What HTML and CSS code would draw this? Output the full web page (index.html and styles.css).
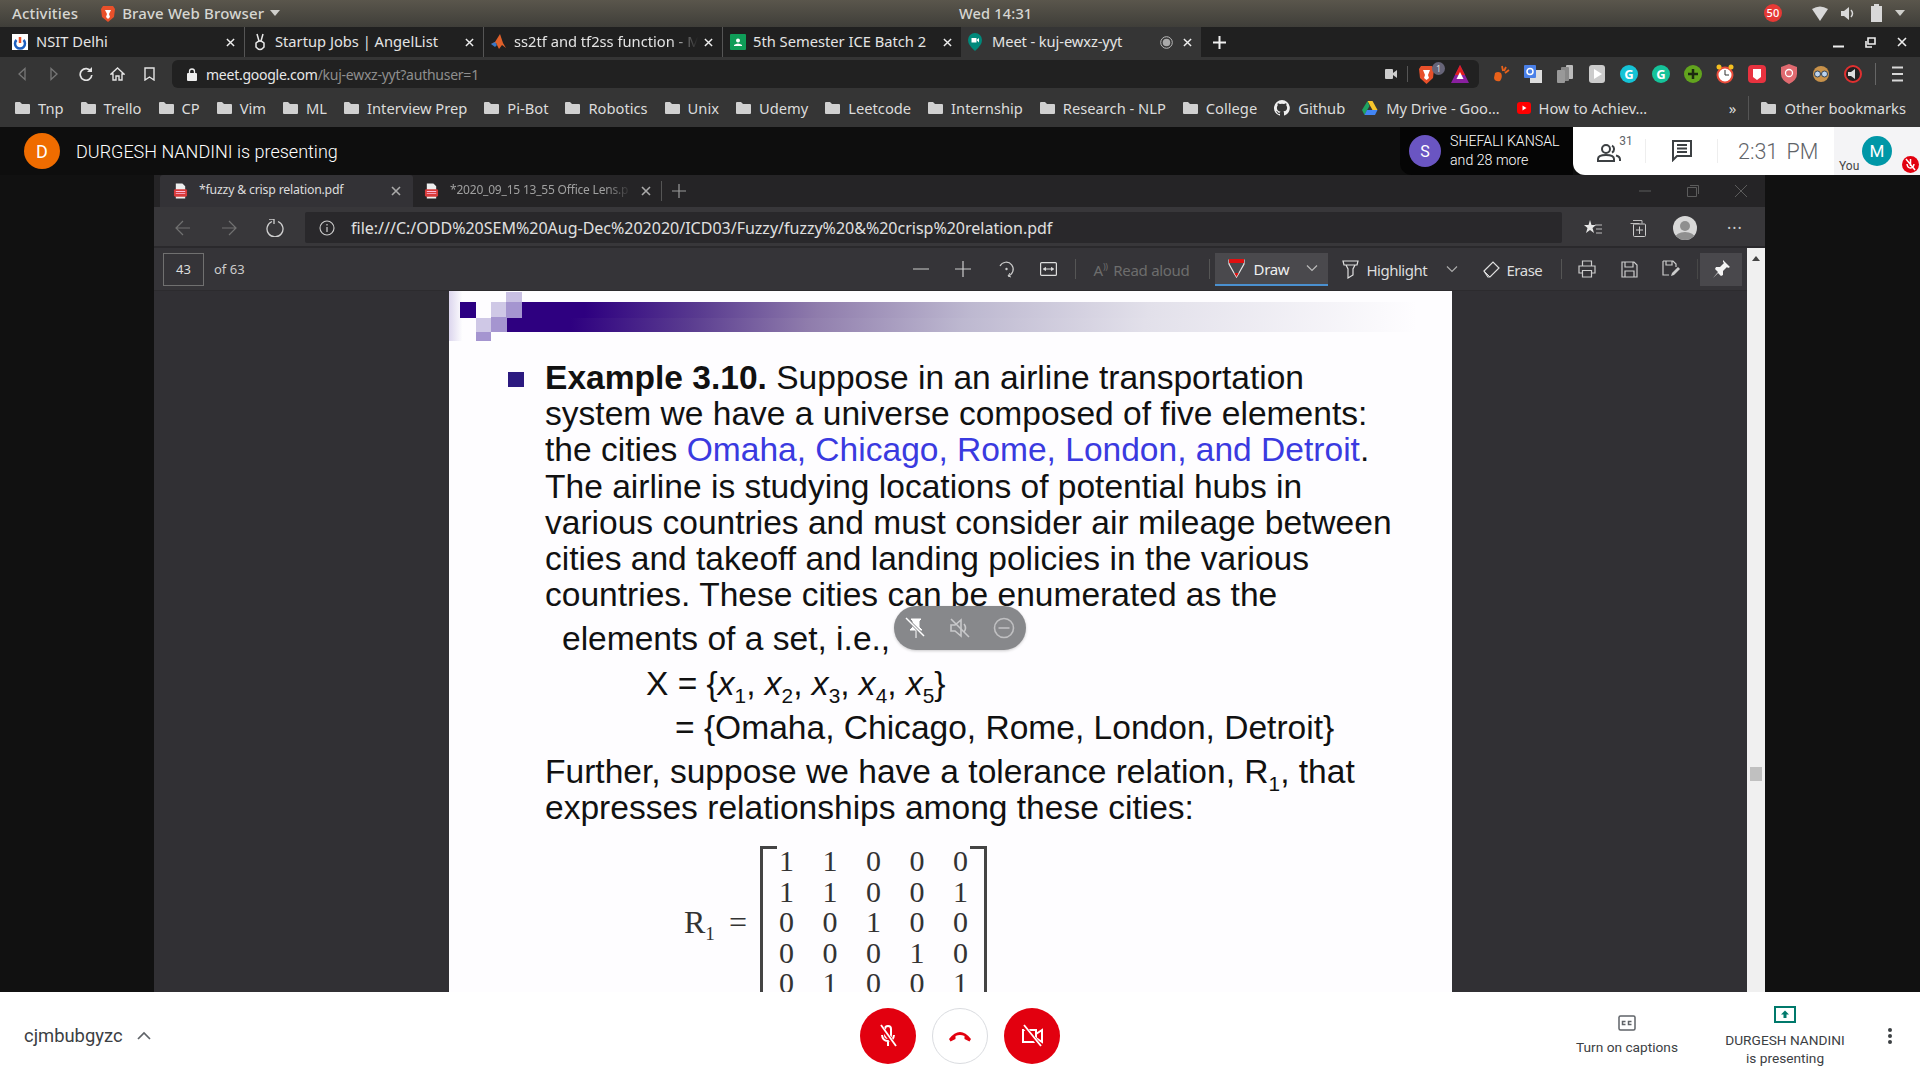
FILE: index.html
```html
<!DOCTYPE html>
<html lang="en">
<head>
<meta charset="utf-8">
<title>Meet - kuj-ewxz-yyt</title>
<link rel="stylesheet" href="styles.css">
</head>
<body>
<svg class="defs" width="0" height="0">
  <symbol id="folder" viewBox="0 0 15 14"><path d="M0 2a1 1 0 0 1 1-1h4l2 2h7a1 1 0 0 1 1 1v8a1 1 0 0 1-1 1H1a1 1 0 0 1-1-1z" fill="#d0d0d0"/></symbol>
  <symbol id="pdf" viewBox="0 0 16 16"><path d="M3 0h7l3 3v13H3z" fill="#eee"/><rect x="1" y="6" width="14" height="8" rx="1.5" fill="#d83b3b"/><path d="M3 8h10v1H3zm0 2h10v1H3z" fill="#fbd"/></symbol>
  <symbol id="close" viewBox="0 0 10 10"><path d="M1 1l8 8M9 1l-8 8" stroke="currentColor" stroke-width="1.6" fill="none"/></symbol>
  <symbol id="chev" viewBox="0 0 12 8"><path d="M1 1.5l5 5 5-5" stroke="currentColor" stroke-width="1.2" fill="none"/></symbol>
</svg>

<header class="sys">
  <div class="sys-left">
    <span>Activities</span>
    <svg class="sys-brave" width="14" height="17" viewBox="0 0 14 17"><path d="M2 1h10l2 3-1 8-6 5-6-5L0 4z" fill="#e8502a"/><path d="M4 5h6L8 9l1 3-2 2-2-2 1-3z" fill="#fff"/></svg>
    <span>Brave Web Browser</span>
    <i class="caret"></i>
  </div>
  <div class="sys-clock">Wed 14:31</div>
  <div class="sys-right">
    <span class="sys-badge">50</span>
    <svg width="16" height="15" viewBox="0 0 16 15"><path d="M0 3Q8-2 16 3L8 15z" fill="#d8d8d8"/></svg>
    <svg width="14" height="15" viewBox="0 0 14 15"><path d="M0 5h3l5-4v13l-5-4H0z" fill="#d8d8d8"/><path d="M10 4q3 3.500 0 7" stroke="#d8d8d8" stroke-width="1.500" fill="none"/></svg>
    <svg width="11" height="18" viewBox="0 0 11 18"><path d="M3 0h5v2h3v16H0V2h3z" fill="#d8d8d8"/></svg>
    <i class="caret"></i>
  </div>
</header>

<nav class="tabs">
  <div class="tab first">
    <svg class="fav" width="16" height="16" viewBox="0 0 16 16"><rect width="16" height="16" fill="#fff"/><path d="M8 3v6" stroke="#e8502a" stroke-width="2.500"/><path d="M4.500 6a5 5 0 1 0 7 0" stroke="#1d5fc0" stroke-width="2.500" fill="none"/></svg>
    <span class="tab-title">NSIT Delhi</span>
    <svg class="tab-x" width="9" height="9"><use href="#close"/></svg>
  </div>
  <div class="tab sep">
    <svg class="fav" width="16" height="18" viewBox="0 0 16 18"><path d="M5 1l2 7M11 1L9 8M4 10q4-4 8 0v4q-4 5-8 0z" stroke="#e8e8e8" stroke-width="1.500" fill="none"/></svg>
    <span class="tab-title">Startup Jobs | AngelList</span>
    <svg class="tab-x" width="9" height="9"><use href="#close"/></svg>
  </div>
  <div class="tab sep">
    <svg class="fav" width="16" height="16" viewBox="0 0 16 16"><path d="M0 10l4-2 5-8 3 9 3 5-4-3-3 4-3-6z" fill="#e0602a"/><path d="M0 10l4-2 2 3-2 2z" fill="#3878c8"/></svg>
    <span class="tab-title fade">ss2tf and tf2ss function - M</span>
    <svg class="tab-x" width="9" height="9"><use href="#close"/></svg>
  </div>
  <div class="tab sep">
    <svg class="fav" width="16" height="16" viewBox="0 0 16 16"><rect width="16" height="16" rx="1" fill="#0f9d58"/><circle cx="8" cy="6.500" r="2" fill="#fff"/><path d="M4 12h8v-1q-4-3-8 0z" fill="#fff"/></svg>
    <span class="tab-title">5th Semester ICE Batch 2</span>
    <svg class="tab-x" width="9" height="9"><use href="#close"/></svg>
  </div>
  <div class="tab active">
    <svg class="fav" width="14" height="18" viewBox="0 0 14 18"><path d="M7 0a7 7 0 0 1 7 7q0 5-7 11Q0 12 0 7a7 7 0 0 1 7-7z" fill="#00897b"/><rect x="3.500" y="5" width="5" height="4.500" fill="#fff"/><path d="M8.500 7l2.500-2v4.500z" fill="#fff"/></svg>
    <span class="tab-title">Meet - kuj-ewxz-yyt</span>
    <svg class="rec" width="13" height="13" viewBox="0 0 13 13"><circle cx="6.500" cy="6.500" r="5.800" fill="none" stroke="#bbb"/><circle cx="6.500" cy="6.500" r="3.800" fill="#aaa"/></svg>
    <svg class="tab-x" width="9" height="9"><use href="#close"/></svg>
  </div>
  <svg class="tab-new" width="13" height="13" viewBox="0 0 13 13"><path d="M6.500 0v13M0 6.500h13" stroke="#f0f0f0" stroke-width="2"/></svg>
  <div class="win">
    <svg width="11" height="11" viewBox="0 0 11 11"><path d="M0 9.500h11" stroke="#eee" stroke-width="2"/></svg>
    <svg width="11" height="11" viewBox="0 0 11 11"><path d="M3 1h7v6H3zM1 4v6h6" stroke="#eee" stroke-width="1.600" fill="none"/></svg>
    <svg width="10" height="10"><use href="#close"/></svg>
  </div>
</nav>

<section class="omni">
  <div class="omni-nav">
    <svg width="10" height="14" viewBox="0 0 10 14"><path d="M8 1.500L2 7l6 5.500z" fill="none" stroke="#777" stroke-width="1.300"/></svg>
    <svg width="10" height="14" viewBox="0 0 10 14"><path d="M2 1.500L8 7l-6 5.500z" fill="none" stroke="#777" stroke-width="1.300"/></svg>
    <svg width="14" height="14" viewBox="0 0 14 14"><path d="M12 4.500A5.800 5.800 0 1 0 12.800 8" fill="none" stroke="#e4e4e4" stroke-width="1.700"/><path d="M13 0v5H8z" fill="#e4e4e4"/></svg>
    <svg width="15" height="14" viewBox="0 0 15 14"><path d="M7.500 1L1 7h2v6h3V9h3v4h3V7h2z" fill="none" stroke="#e4e4e4" stroke-width="1.400"/></svg>
    <svg width="11" height="14" viewBox="0 0 11 14"><path d="M1 1h9v12L5.500 10 1 13z" fill="none" stroke="#e4e4e4" stroke-width="1.400"/></svg>
  </div>
  <div class="url">
    <svg class="lock" width="10" height="13" viewBox="0 0 10 13"><path d="M2.500 6V3.500a2.500 2.500 0 0 1 5 0V6" fill="none" stroke="#eee" stroke-width="1.300"/><rect y="5" width="10" height="8" rx="1" fill="#eee"/></svg>
    <span class="url-host">meet.google.com</span><span class="url-path">/kuj-ewxz-yyt?authuser=1</span>
    <div class="url-end">
      <svg width="12" height="10" viewBox="0 0 12 10"><rect width="8" height="10" rx="1" fill="#ccc"/><path d="M8 4l4-3v8L8 6z" fill="#ccc"/></svg>
      <i class="vsep"></i>
      <svg class="u-brave" width="15" height="19" viewBox="0 0 15 19"><path d="M2 1h11l2 3-1 9-6.500 6L1 13 0 4z" fill="#e8502a"/><path d="M4 5h7L9 10l1 3-2.500 2L5 13l1-3z" fill="#fff"/></svg>
      <span class="u-badge">1</span>
      <svg class="u-tri" width="18" height="18" viewBox="0 0 18 18"><path d="M9 0l9 18H0z" fill="#8a1fa0"/><path d="M9 0l5 10H4z" fill="#e02020"/><path d="M9 7l3.500 7h-7z" fill="#fff"/></svg>
    </div>
  </div>
  <div class="exts">
    <svg width="18" height="18" viewBox="0 0 18 18"><path d="M3 8q3-2 6 0 2 4-1 8-5 1-6-3z" fill="#e8611a"/><path d="M10 1l1 5M14 2l-2 4M17 5l-4 3" stroke="#e8611a" stroke-width="1.800"/></svg>
    <svg width="18" height="18" viewBox="0 0 18 18"><rect x="6" y="5" width="12" height="13" fill="#ddd"/><rect width="12" height="13" rx="1" fill="#4a80e8"/><circle cx="6" cy="6.500" r="3" fill="none" stroke="#fff" stroke-width="1.500"/></svg>
    <svg width="18" height="18" viewBox="0 0 18 18"><rect x="10" y="0" width="7" height="14" rx="1" fill="#bbb"/><rect x="5" y="2" width="8" height="14" rx="1" fill="#888"/><rect x="1" y="5" width="8" height="13" rx="1" fill="#999"/></svg>
    <svg width="18" height="18" viewBox="0 0 18 18"><rect x="1" width="16" height="18" rx="3" fill="#ccc"/><path d="M6 4l8 5-8 5z" fill="#fff"/></svg>
    <svg width="18" height="18" viewBox="0 0 18 18"><circle cx="9" cy="9" r="9" fill="#15c3d6"/><text x="9" y="13.500" class="ext-g">G</text></svg>
    <svg width="18" height="18" viewBox="0 0 18 18"><circle cx="9" cy="9" r="9" fill="#15c39a"/><text x="9" y="13.500" class="ext-g">G</text></svg>
    <svg width="18" height="18" viewBox="0 0 18 18"><circle cx="9" cy="9" r="9" fill="#62a41e"/><path d="M9 4v10M4 9h10" stroke="#1c2a10" stroke-width="2.500"/></svg>
    <svg width="18" height="20" viewBox="0 0 18 20"><circle cx="9" cy="11" r="7.500" fill="#fff" stroke="#e84b3a" stroke-width="2"/><circle cx="3" cy="3" r="2.500" fill="#f4c020"/><circle cx="15" cy="3" r="2.500" fill="#f4c020"/><path d="M9 6v5h4" stroke="#333" fill="none"/></svg>
    <svg width="18" height="18" viewBox="0 0 18 18"><rect width="18" height="18" rx="4" fill="#e8323f"/><path d="M5 4h8v8l-4 3-4-3z" fill="#fff"/></svg>
    <svg width="18" height="20" viewBox="0 0 18 20"><path d="M9 0l8 3v7q0 6-8 10-8-4-8-10V3z" fill="#e06a70"/><circle cx="9" cy="9" r="3.500" fill="none" stroke="#fff" stroke-width="1.300"/></svg>
    <svg width="18" height="20" viewBox="0 0 18 20"><circle cx="9" cy="10" r="8" fill="#c8924a"/><circle cx="5.500" cy="10" r="3" fill="#bcd4f0" stroke="#345" stroke-width="1"/><circle cx="12.500" cy="10" r="3" fill="#bcd4f0" stroke="#345" stroke-width="1"/></svg>
    <svg width="18" height="18" viewBox="0 0 18 18"><circle cx="9" cy="9" r="8" fill="#222" stroke="#e03030" stroke-width="2"/><path d="M4 7h3l4-3v10l-4-3H4z" fill="#ddd"/></svg>
    <i class="vsep ext-sep"></i>
    <svg class="menu" width="11" height="16" viewBox="0 0 11 16"><path d="M0 1.500h11M0 8h11M0 14.500h11" stroke="#d8d8d8" stroke-width="2"/></svg>
  </div>
</section>

<section class="bookmarks">
  <a class="bm"><svg width="15" height="14"><use href="#folder"/></svg>Tnp</a>
  <a class="bm"><svg width="15" height="14"><use href="#folder"/></svg>Trello</a>
  <a class="bm"><svg width="15" height="14"><use href="#folder"/></svg>CP</a>
  <a class="bm"><svg width="15" height="14"><use href="#folder"/></svg>Vim</a>
  <a class="bm"><svg width="15" height="14"><use href="#folder"/></svg>ML</a>
  <a class="bm"><svg width="15" height="14"><use href="#folder"/></svg>Interview Prep</a>
  <a class="bm"><svg width="15" height="14"><use href="#folder"/></svg>Pi-Bot</a>
  <a class="bm"><svg width="15" height="14"><use href="#folder"/></svg>Robotics</a>
  <a class="bm"><svg width="15" height="14"><use href="#folder"/></svg>Unix</a>
  <a class="bm"><svg width="15" height="14"><use href="#folder"/></svg>Udemy</a>
  <a class="bm"><svg width="15" height="14"><use href="#folder"/></svg>Leetcode</a>
  <a class="bm"><svg width="15" height="14"><use href="#folder"/></svg>Internship</a>
  <a class="bm"><svg width="15" height="14"><use href="#folder"/></svg>Research - NLP</a>
  <a class="bm"><svg width="15" height="14"><use href="#folder"/></svg>College</a>
  <a class="bm"><svg width="16" height="16" viewBox="0 0 16 16"><path fill="#eee" d="M8 0a8 8 0 0 0-2.500 15.600c.4.100.5-.2.500-.4v-1.400c-2.200.5-2.700-1-2.700-1-.4-.9-.9-1.200-.9-1.200-.7-.5.100-.5.100-.5.800.100 1.200.8 1.200.8.700 1.200 1.900.9 2.300.7.100-.5.300-.9.500-1.100-1.800-.2-3.600-.9-3.600-4 0-.9.300-1.600.8-2.100-.1-.2-.4-1 .1-2.100 0 0 .7-.2 2.200.8a7.600 7.600 0 0 1 4 0c1.500-1 2.200-.8 2.200-.8.400 1.100.200 1.900.100 2.100.5.600.8 1.300.8 2.100 0 3.100-1.900 3.700-3.700 3.900.3.300.6.800.6 1.500v2.200c0 .2.100.5.600.4A8 8 0 0 0 8 0z"/></svg>Github</a>
  <a class="bm"><svg width="16" height="14" viewBox="0 0 16 14"><path d="M5.500 0h5l5 9h-5z" fill="#f7c52b"/><path d="M5.500 0L0 9l2.500 5 5-9z" fill="#1ea362"/><path d="M2.500 14h10.500l2.500-5H5z" fill="#4285f4"/></svg>My Drive - Goo…</a>
  <a class="bm"><svg width="14" height="12" viewBox="0 0 14 12"><rect width="14" height="12" rx="3" fill="#f00"/><path d="M5.500 3.500l4 2.500-4 2.500z" fill="#fff"/></svg>How to Achiev…</a>
  <div class="bm-end">
    <span class="bm-more">»</span>
    <i class="vsep"></i>
    <a class="bm"><svg width="15" height="14"><use href="#folder"/></svg>Other bookmarks</a>
  </div>
</section>

<section class="meet-head">
  <span class="avatar av-d">D</span>
  <span class="presenting">DURGESH NANDINI is presenting</span>
  <div class="speaker">
    <span class="avatar av-s">S</span>
    <div class="speaker-text"><div>SHEFALI KANSAL</div><div>and 28 more</div></div>
  </div>
  <div class="panel">
    <div class="panel-cell people">
      <svg width="24" height="20" viewBox="0 0 24 20"><circle cx="9" cy="6" r="4" fill="none" stroke="#3c4043" stroke-width="2"/><path d="M1 18v-2q0-4 8-4t8 4v2z" fill="none" stroke="#3c4043" stroke-width="2"/><path d="M15 2.500a4 4 0 0 1 0 7M19 12.500q4 1 4 4v1.500" fill="none" stroke="#3c4043" stroke-width="2"/></svg>
      <sup class="count">31</sup>
    </div>
    <div class="panel-cell chat">
      <svg width="20" height="22" viewBox="0 0 20 22"><path d="M1 1h18v15H5l-4 4z" fill="none" stroke="#3c4043" stroke-width="2"/><path d="M5 5h10M5 8.500h10M5 12h10" stroke="#3c4043" stroke-width="1.800"/></svg>
    </div>
    <div class="panel-time">2:31 PM</div>
    <div class="self">
      <span class="you">You</span>
      <span class="avatar av-m">M</span>
      <span class="self-mute"><svg width="11" height="13" viewBox="0 0 11 13"><path d="M5.500 1v7M2 6q.5 4 3.500 4T9 6M1 1l9 11" stroke="#fff" stroke-width="1.500" fill="none"/></svg></span>
    </div>
  </div>
</section>

<main class="stage">
  <div class="edge">
    <div class="edge-tabs">
      <div class="etab on">
        <svg width="15" height="16"><use href="#pdf"/></svg>
        <span class="etab-title">*fuzzy &amp; crisp relation.pdf</span>
        <svg class="etab-x" width="10" height="10"><use href="#close"/></svg>
      </div>
      <div class="etab off">
        <svg width="15" height="16"><use href="#pdf"/></svg>
        <span class="etab-title dim fade">*2020_09_15 13_55 Office Lens.p</span>
        <svg class="etab-x" width="10" height="10"><use href="#close"/></svg>
      </div>
      <i class="vsep etab-sep"></i>
      <svg class="etab-new" width="14" height="14" viewBox="0 0 14 14"><path d="M7 0v14M0 7h14" stroke="#9a9a9a" stroke-width="1.200"/></svg>
      <div class="edge-win">
        <svg width="12" height="12" viewBox="0 0 12 12"><path d="M0 6h12" stroke="#5c5c5c"/></svg>
        <svg width="12" height="12" viewBox="0 0 12 12"><path d="M.5 2.500h9v9h-9zM3 .500h8.500V9" stroke="#5c5c5c" fill="none"/></svg>
        <svg width="12" height="12" viewBox="0 0 12 12"><path d="M0 0l12 12M12 0L0 12" stroke="#5c5c5c"/></svg>
      </div>
    </div>
    <div class="edge-nav">
      <svg class="en-a" width="16" height="16" viewBox="0 0 16 16"><path d="M15 8H1M8 1L1 8l7 7" stroke="#717171" stroke-width="1.200" fill="none"/></svg>
      <svg class="en-b" width="16" height="16" viewBox="0 0 16 16"><path d="M1 8h14M8 1l7 7-7 7" stroke="#717171" stroke-width="1.200" fill="none"/></svg>
      <svg class="en-c" width="18" height="18" viewBox="0 0 18 18"><path d="M6 2.500A8 8 0 1 0 12 2.500" stroke="#d0d0d0" stroke-width="1.300" fill="none"/><path d="M3 0h5v5" stroke="#d0d0d0" stroke-width="1.300" fill="none"/></svg>
      <div class="edge-url">
        <svg width="16" height="16" viewBox="0 0 16 16"><circle cx="8" cy="8" r="7" fill="none" stroke="#ccc" stroke-width="1.100"/><path d="M8 7v5M8 4v1.500" stroke="#ccc" stroke-width="1.200"/></svg>
        <span>file:///C:/ODD%20SEM%20Aug-Dec%202020/ICD03/Fuzzy/fuzzy%20&amp;%20crisp%20relation.pdf</span>
      </div>
      <div class="edge-tools">
        <svg width="18" height="18" viewBox="0 0 18 18"><path d="M6 1l1.500 5H12L8.500 9l1.500 5L6 11l-4 3 1.500-5L0 6h4.500z" fill="#e6e6e6"/><path d="M11 6h7M12 10h6M12 14h6" stroke="#bbb" stroke-width="1.200"/></svg>
        <svg width="18" height="18" viewBox="0 0 18 18"><path d="M4 1.500h9v3M1.500 4.500h9" stroke="#bdbdbd" fill="none"/><rect x="4.500" y="5" width="12" height="12.500" rx="1" stroke="#ccc" fill="none"/><path d="M10.500 7.500v7.500M7 11h7" stroke="#ccc"/></svg>
        <svg class="et-av" width="24" height="24" viewBox="0 0 24 24"><defs><clipPath id="clip-av"><circle cx="12" cy="12" r="12"/></clipPath></defs><circle cx="12" cy="12" r="12" fill="#d8d8d8"/><g clip-path="url(#clip-av)"><circle cx="12" cy="10" r="5" fill="#8f8f8f"/><ellipse cx="12" cy="22" rx="10" ry="6" fill="#8f8f8f"/></g></svg>
        <span class="dots">···</span>
      </div>
    </div>
    <div class="pdf-wrap">
      <div class="pdf-col">
        <div class="pdf-bar">
          <span class="pg-box">43</span>
          <span class="pg-of">of 63</span>
          <div class="pdf-tools">
            <svg class="t-zoom-out" width="16" height="2" viewBox="0 0 16 2"><path d="M0 1h16" stroke="#aaa" stroke-width="1.300"/></svg>
            <svg class="t-zoom-in" width="16" height="16" viewBox="0 0 16 16"><path d="M8 0v16M0 8h16" stroke="#ccc" stroke-width="1.200"/></svg>
            <svg class="t-rot" width="18" height="18" viewBox="0 0 18 18"><path d="M3 6a7 7 0 1 1 8 10" stroke="#ccc" stroke-width="1.200" fill="none"/><path d="M11 16l2-3M11 16l3 1" stroke="#ccc"/><circle cx="9.500" cy="9" r="1.200" fill="#ccc"/></svg>
            <svg class="t-fit" width="17" height="14" viewBox="0 0 17 14"><rect x=".6" y=".6" width="15.800" height="12.800" rx="1" stroke="#ddd" stroke-width="1.200" fill="none"/><path d="M3.500 7h10M3.500 7l2-1.500v3zM13.500 7l-2-1.500v3z" stroke="#ddd" fill="#ddd"/></svg>
            <i class="vsep t-sep1"></i>
            <span class="read"><span class="read-a">A<sup>))</sup></span> Read aloud</span>
            <i class="vsep t-sep2"></i>
            <div class="draw">
              <svg width="17" height="19" viewBox="0 0 17 19"><path d="M1 1h15v4l-5 9-2.500 4L6 14 1 5z" fill="none" stroke="#e6e6e6" stroke-width="1.200"/><rect x="1" y="0" width="15" height="4" fill="#e01010"/><path d="M6.500 14h4L8.500 18z" fill="#e01010"/></svg>
              <span>Draw</span>
              <svg class="dchev" width="12" height="8"><use href="#chev"/></svg>
            </div>
            <div class="tool hl">
              <svg width="17" height="19" viewBox="0 0 17 19"><path d="M1 1h15L15 5h-2l-2 4v6l-5 3V9L4 5H2zM2 5h13" fill="none" stroke="#e0e0e0" stroke-width="1.200"/></svg>
              <span>Highlight</span>
              <svg class="hchev" width="12" height="8"><use href="#chev"/></svg>
            </div>
            <div class="tool erase">
              <svg width="17" height="17" viewBox="0 0 17 17"><path d="M1 10l9-9 6 6-9 9H5z" fill="none" stroke="#e0e0e0" stroke-width="1.200"/><path d="M1 10l6 6" stroke="#e0e0e0"/></svg>
              <span>Erase</span>
            </div>
            <i class="vsep t-sep3"></i>
            <svg class="t-print" width="18" height="18" viewBox="0 0 18 18"><path d="M4.500 6V1h9v5M4.500 13H1V6h16v7h-3.500M4.500 10.500h9V17h-9z" fill="none" stroke="#ccc" stroke-width="1.200"/></svg>
            <svg class="t-save" width="17" height="17" viewBox="0 0 17 17"><path d="M1 1h12l3 3v12H1zM4 1v5h8V1M4 16v-6h9v6" fill="none" stroke="#ccc" stroke-width="1.200"/></svg>
            <svg class="t-saveas" width="18" height="18" viewBox="0 0 18 18"><path d="M1 1h10l3 3v3M1 1v14h6M4 1v4h6V1" fill="none" stroke="#ccc" stroke-width="1.200"/><path d="M9 16l1-3 6-6 2 2-6 6z" fill="#ccc"/></svg>
            <i class="vsep t-sep4"></i>
            <div class="pin">
              <svg width="18" height="18" viewBox="0 0 18 18"><path d="M11 0l7 7-2 1-1-1-4 4v4l-2 1-3-3-5 5 5-6-3-3 1-2h4l4-4-1-1z" fill="#f4f4f4"/></svg>
            </div>
          </div>
        </div>
        <div class="pdf-body">
          <article class="page">
            <svg class="banner" width="1003" height="50" viewBox="0 0 1003 50">
              <defs>
                <linearGradient id="bg" x1="0" x2="1">
                  <stop offset="0" stop-color="#2e0080"/>
                  <stop offset=".07" stop-color="#2e0080"/>
                  <stop offset=".2" stop-color="#5a3c90"/>
                  <stop offset=".33" stop-color="#8f7cac"/>
                  <stop offset=".5" stop-color="#bdb8d0"/>
                  <stop offset=".7" stop-color="#e2e0ea"/>
                  <stop offset="1" stop-color="#fefdff"/>
                </linearGradient>
                <linearGradient id="bl" x1="0" x2="1">
                  <stop offset="0" stop-color="#dcd6ee"/>
                  <stop offset="1" stop-color="#fff"/>
                </linearGradient>
              </defs>
              <rect width="14" height="50" fill="url(#bl)"/>
              <rect x="73" y="11" width="895" height="16" fill="url(#bg)"/>
              <rect x="58" y="27" width="910" height="14" fill="url(#bg)"/>
              <rect x="11" y="11" width="16" height="16" fill="#2c0082"/>
              <rect x="57" y="1" width="16" height="10" fill="#c9c0e3"/>
              <rect x="42" y="11" width="15" height="15" fill="#cfc8e6"/>
              <rect x="57" y="11" width="16" height="16" fill="#a595d0"/>
              <rect x="27" y="27" width="15" height="14" fill="#cfc8e6"/>
              <rect x="42" y="26" width="16" height="15" fill="#a595d0"/>
              <rect x="27" y="41" width="15" height="9" fill="#a595d0"/>
            </svg>
            <div class="copy">
              <div class="para lead-block">
                <i class="bullet"></i>
                <p><b>Example 3.10.</b> Suppose in an airline transportation</p>
                <p>system we have a universe composed of five elements:</p>
                <p>the cities <span class="blue">Omaha, Chicago, Rome, London, and Detroit</span>.</p>
                <p>The airline is studying locations of potential hubs in</p>
                <p>various countries and must consider air mileage between</p>
                <p>cities and takeoff and landing policies in the various</p>
                <p>countries. These cities can be enumerated as the</p>
              </div>
              <p class="gap l-set">elements of a set, i.e.,</p>
              <p class="gap l-x">X = {<em>x</em><sub>1</sub>, <em>x</em><sub>2</sub>, <em>x</em><sub>3</sub>, <em>x</em><sub>4</sub>, <em>x</em><sub>5</sub>}</p>
              <p class="gap l-eq">= {Omaha, Chicago, Rome, London, Detroit}</p>
              <p class="gap">Further, suppose we have a tolerance relation, R<sub>1</sub>, that</p>
              <p>expresses relationships among these cities:</p>
              <div class="matrix-row">
                <span class="mat-label">R<sub>1</sub> =</span>
                <div class="matrix">
                  <span>1</span><span>1</span><span>0</span><span>0</span><span>0</span>
                  <span>1</span><span>1</span><span>0</span><span>0</span><span>1</span>
                  <span>0</span><span>0</span><span>1</span><span>0</span><span>0</span>
                  <span>0</span><span>0</span><span>0</span><span>1</span><span>0</span>
                  <span>0</span><span>1</span><span>0</span><span>0</span><span>1</span>
                </div>
              </div>
            </div>
          </article>
          <div class="pill">
            <svg width="22" height="22" viewBox="0 0 22 22"><path d="M6 2h10l-2 2v6l3 3H5l3-3V4zM11 13v8" fill="#fff" stroke="#fff"/><path d="M2 2l18 18" stroke="#8a8b8e" stroke-width="3"/><path d="M1 1l18 18" stroke="#fff" stroke-width="1.500"/></svg>
            <svg width="22" height="22" viewBox="0 0 22 22"><path d="M2 8h4l6-5v16l-6-5H2z" fill="none" stroke="#c8c8ca" stroke-width="1.600"/><path d="M15 7q3 4 0 8M2 2l18 18" stroke="#c8c8ca" stroke-width="1.600" fill="none"/></svg>
            <svg width="22" height="22" viewBox="0 0 22 22"><circle cx="11" cy="11" r="9.500" fill="none" stroke="#c0c0c2" stroke-width="1.600"/><path d="M5.500 11h11" stroke="#c0c0c2" stroke-width="1.600"/></svg>
          </div>
        </div>
      </div>
      <div class="scroll">
        <i class="sc-up"></i>
        <i class="sc-thumb"></i>
      </div>
    </div>
  </div>
</main>

<footer class="bottom">
  <div class="meeting">
    <span>cjmbubgyzc</span>
    <svg width="14" height="9" viewBox="0 0 14 9"><path d="M1 8l6-6 6 6" fill="none" stroke="#5f6368" stroke-width="1.700"/></svg>
  </div>
  <div class="calls">
    <button class="round red"><svg width="22" height="24" viewBox="0 0 22 24"><path d="M11 2a3 3 0 0 1 3 3v6a3 3 0 0 1-6 0V5a3 3 0 0 1 3-3zM5 11q.5 6 6 6t6-6M11 17v5" fill="none" stroke="#fff" stroke-width="2"/><path d="M3 1l16 22" stroke="#e2000f" stroke-width="4"/><path d="M4 1l15 21" stroke="#fff" stroke-width="1.800"/></svg></button>
    <button class="round plain"><svg width="24" height="12" viewBox="0 0 24 12"><path d="M1 9Q12-5 23 9l-1.500 2.500-5-2.500V6q-4.500-2-9 0v3l-5 2.500z" fill="#e2000f"/></svg></button>
    <button class="round red"><svg width="24" height="24" viewBox="0 0 24 24"><path d="M3 6h13v12H3zM16 10l6-4v12l-6-4" fill="none" stroke="#fff" stroke-width="2"/><path d="M3 1l18 22" stroke="#e2000f" stroke-width="4"/><path d="M4 1l17 21" stroke="#fff" stroke-width="1.800"/></svg></button>
  </div>
  <div class="actions">
    <div class="act caps">
      <svg width="18" height="16" viewBox="0 0 18 16"><rect x="1" y="1" width="16" height="14" rx="1.500" fill="none" stroke="#5f6368" stroke-width="1.500"/><path d="M7.500 6.500h-3v3h3M13.500 6.500h-3v3h3" fill="none" stroke="#5f6368" stroke-width="1.500"/></svg>
      <span>Turn on captions</span>
    </div>
    <div class="act pres">
      <svg width="22" height="17" viewBox="0 0 22 17"><rect x="1" y="1" width="20" height="15" fill="none" stroke="#00796b" stroke-width="2"/><path d="M11 4.500l4 4h-2.500v3.500h-3V8.500H7z" fill="#00796b"/></svg>
      <span>DURGESH NANDINI</span>
      <span>is presenting</span>
    </div>
    <svg class="kebab" width="6" height="18" viewBox="0 0 6 18"><circle cx="3" cy="3" r="2" fill="#3c4043"/><circle cx="3" cy="9" r="2" fill="#3c4043"/><circle cx="3" cy="15" r="2" fill="#3c4043"/></svg>
  </div>
</footer>
</body>
</html>
```
FILE: styles.css
```css
* { box-sizing: border-box; }
html, body { margin: 0; height: 100%; }
body { width: 1920px; height: 1080px; overflow: hidden; display: flex; flex-direction: column; font-family: "Noto Sans", sans-serif; background: #111; }
.defs { position: absolute; }
i { display: block; font-style: normal; }
svg { display: block; flex: none; }
.vsep { width: 1px; height: 24px; background: #555; flex: none; }

/* ubuntu bar */
.sys { height: 27px; flex: none; display: flex; align-items: center; padding: 0 0 1px 12px; color: #d6d6d2; font-size: 15px; font-weight: 500; background: linear-gradient(#5a564c, #3f3e39); letter-spacing: .15px; }
.sys-left { width: 947px; display: flex; align-items: center; gap: 6px; }
.sys-left span:first-child { margin-right: 17px; }
.sys-brave { margin-right: 1px; }
.caret { width: 0; height: 0; border-left: 5px solid transparent; border-right: 5px solid transparent; border-top: 6px solid #cfcfcb; }
.sys-clock { width: 76px; white-space: nowrap; font-size: 14.600px; }
.sys-right { margin-left: auto; display: flex; align-items: center; padding-right: 15px; }
.sys-badge { width: 18px; height: 18px; border-radius: 50%; background: #e53935; color: #fff; font-size: 11px; text-align: center; line-height: 18px; margin-right: 30px; }
.sys-right svg:nth-of-type(1) { margin-right: 13px; }
.sys-right svg:nth-of-type(2) { margin-right: 16px; }
.sys-right svg:nth-of-type(3) { margin-right: 13px; }

/* brave tabs */
.tabs { height: 30px; flex: none; display: flex; align-items: center; background: #202020; color: #e4e4e4; font-size: 14.700px; }
.tab { width: 239px; height: 30px; display: flex; align-items: center; padding: 0 9px 0 8px; position: relative; }
.tab.first { width: 244px; padding-left: 12px; }
.tab.sep { border-left: 1px solid #555; height: 30px; }
.tab.sep { padding-left: 7px; }
.tab-title { margin-left: 7px; white-space: nowrap; overflow: hidden; flex: 1; min-width: 0; line-height: 28px; height: 30px; }
.tab.first .tab-title { margin-left: 8px; }
.tab-x { color: #eee; flex: none; margin-left: 6px; }
.tab.active { width: 240px; background: #353535; padding-left: 7px; }
.tab.active .tab-title { margin-left: 10px; letter-spacing: -.1px; }
.rec { margin-right: 10px; }
.tab.active .tab-x { margin-left: 0; }
.fade { -webkit-mask-image: linear-gradient(90deg, #000 85%, transparent); mask-image: linear-gradient(90deg, #000 85%, transparent); }
.tab-new { margin-left: 12px; }
.win { margin-left: auto; display: flex; gap: 21px; align-items: center; padding-right: 13px; color: #eee; }

/* omnibox */
.omni { height: 33px; flex: none; display: flex; align-items: center; background: #353535; padding: 1px 0 0 17px; }
.omni-nav { display: flex; align-items: center; width: 155px; }
.omni-nav svg:nth-child(2) { margin-left: 22px; }
.omni-nav svg:nth-child(3) { margin-left: 20px; }
.omni-nav svg:nth-child(4) { margin-left: 17px; }
.omni-nav svg:nth-child(5) { margin-left: 19px; }
.url { width: 1307px; height: 28px; background: #212121; border-radius: 6px; display: flex; align-items: center; padding-left: 15px; font-size: 14px; letter-spacing: -.25px; }
.url-host { color: #e8e8e8; margin-left: 9px; }
.url-path { color: #8e8e8e; }
.url-end { margin-left: auto; display: flex; align-items: center; padding-right: 10px; position: relative; }
.url-end .vsep { height: 16px; margin: 0 11px 0 10px; }
.u-badge { position: absolute; left: 47px; top: -3px; width: 13px; height: 13px; border-radius: 50%; background: #666478; color: #ddd; font-size: 9px; line-height: 13px; text-align: center; }
.u-tri { margin-left: 17px; }
.exts { display: flex; align-items: center; gap: 14px; margin-left: 13px; }
.ext-g { font: 700 13px "Noto Sans", sans-serif; fill: #fff; text-anchor: middle; }
.ext-sep { height: 22px; margin: 0 -1px 0 -1px; background: #666; }
.menu { margin-left: 3px; }

/* bookmarks */
.bookmarks { height: 37px; flex: none; display: flex; align-items: center; background: #353535; padding: 0 0 2px 15px; gap: 17px; color: #dcdcdc; font-size: 14.700px; }
.bm { display: flex; align-items: center; gap: 8px; white-space: nowrap; }
.bm-end { margin-left: auto; display: flex; align-items: center; gap: 12px; padding-right: 14px; }
.bm-more { font-size: 15px; }

/* meet header */
.meet-head { height: 48px; flex: none; display: flex; align-items: center; background: #0e0e0e; padding-left: 24px; color: #fff; font-family: Roboto, sans-serif; }
.avatar { border-radius: 50%; display: flex; align-items: center; justify-content: center; color: #fff; flex: none; }
.av-d { width: 36px; height: 36px; background: #ef6c00; font-size: 18px; }
.presenting { margin-left: 16px; font-size: 18px; font-weight: 300; }
.speaker { margin-left: auto; width: 173px; height: 48px; background: #050505; border-radius: 0 0 0 12px; display: flex; align-items: center; padding-left: 9px; }
.av-s { width: 32px; height: 32px; background: #6a55c2; font-size: 16px; }
.speaker-text { margin-left: 9px; font-size: 14.200px; line-height: 19px; font-weight: 300; }
.panel { width: 347px; height: 48px; background: #fff; border-radius: 0 0 0 12px; display: flex; align-items: center; color: #5f6368; }
.panel-cell { height: 24px; display: flex; align-items: center; justify-content: center; border-right: 1px solid #eee; flex: none; }
.people { width: 73px; padding-left: 12px; align-items: flex-end; }
.count { font-size: 12px; align-self: flex-start; margin: -5px 0 0 -2px; line-height: 14px; }
.chat { width: 72px; }
.panel-time { width: 116px; padding-left: 20px; font-size: 21.500px; font-weight: 300; word-spacing: 3px; white-space: nowrap; }
.self { flex: 1; height: 48px; background: #f4f4f6; display: flex; align-items: flex-start; position: relative; }
.you { font-size: 12px; color: #444; position: absolute; left: 5px; top: 32px; }
.av-m { width: 30px; height: 30px; background: #0097a7; font-size: 17px; position: absolute; left: 28px; top: 9px; }
.self-mute { position: absolute; right: 1px; top: 29px; width: 17px; height: 17px; border-radius: 50%; background: #e2000f; display: flex; align-items: center; justify-content: center; }

/* stage */
.stage { flex: 1; min-height: 0; display: flex; padding-left: 154px; padding-right: 155px; background: #111; overflow: hidden; }
.edge { flex: 1; min-width: 0; display: flex; flex-direction: column; background: #313034; color: #ddd; font-family: "Noto Sans", sans-serif; }
.edge-tabs { height: 32px; flex: none; display: flex; align-items: center; background: #252426; padding-left: 6px; }
.etab { height: 32px; display: flex; align-items: center; font-size: 12.300px; flex: none; }
.etab.on { width: 253px; background: #333236; padding-left: 13px; border-radius: 3px 3px 0 0; }
.etab.off { width: 250px; padding-left: 11px; }
.etab-title { margin-left: 11px; white-space: nowrap; overflow: hidden; flex: 1; min-width: 0; letter-spacing: -.2px; line-height: 30px; height: 32px; }
.dim { color: #a0a0a0; font-size: 12px; }
.etab-x { margin: 0 12px 0 9px; color: #aaa; }
.etab-sep { height: 20px; margin-left: -2px; }
.etab-new { margin-left: 10px; }
.edge-win { margin-left: auto; display: flex; gap: 36px; padding-right: 18px; }
.edge-nav { height: 39px; flex: none; display: flex; align-items: center; background: #38373a; padding-top: 2px; }
.en-a { margin-left: 21px; }
.en-b { margin-left: 30px; }
.en-c { margin-left: 29px; }
.edge-url { margin-left: 21px; width: 1257px; height: 31px; background: #29282b; display: flex; align-items: center; padding-left: 14px; font-size: 16px; color: #e0e0e0; border-radius: 2px; }
.edge-url span { margin-left: 16px; white-space: nowrap; }
.edge-tools { display: flex; align-items: center; flex: 1; padding-left: 22px; }
.edge-tools svg:nth-child(2) { margin-left: 27px; }
.et-av { margin-left: 26px; }
.dots { margin-left: 30px; color: #ccc; font-size: 16px; letter-spacing: 1px; }
.pdf-wrap { flex: 1; min-height: 0; display: flex; border-top: 2px solid #2a292c; }
.pdf-col { flex: 1; min-width: 0; display: flex; flex-direction: column; position: relative; }
.pdf-bar { height: 43px; flex: none; display: flex; align-items: center; background: #353438; padding-left: 9px; border-bottom: 1px solid #2c2b2e; font-size: 15px; }
.pg-box { width: 41px; height: 33px; flex: none; border: 1px solid #707070; display: flex; align-items: center; justify-content: center; font-size: 13px; color: #ddd; }
.pg-of { margin-left: 10px; font-size: 13px; color: #ccc; white-space: nowrap; flex: none; }
.pdf-tools { display: flex; align-items: center; margin-left: 668px; height: 100%; }
.t-zoom-in { margin-left: 26px; }
.t-rot { margin-left: 26px; }
.t-fit { margin-left: 25px; }
.t-sep1 { margin-left: 18px; height: 20px; }
.read { margin-left: 18px; color: #6d6d6d; white-space: nowrap; letter-spacing: -.3px; padding-top: 2px; }
.read-a { margin-right: 2px; }
.read-a sup { font-size: 9px; }
.t-sep2 { margin-left: 19px; height: 20px; }
.draw { margin-left: 5px; width: 113px; height: 33px; background: #4a494d; border-bottom: 2px solid #4a90d0; display: flex; align-items: center; padding-left: 13px; color: #efefef; }
.draw span { margin-left: 9px; letter-spacing: -.3px; padding-top: 2px; }
.dchev { margin-left: auto; margin-right: 10px; color: #bbb; }
.tool { display: flex; align-items: center; color: #ddd; letter-spacing: -.5px; }
.tool span { padding-top: 2px; }
.hl { margin-left: 14px; width: 130px; }
.hl span { margin-left: 8px; }
.hchev { margin-left: 19px; color: #aaa; }
.erase { margin-left: 11px; }
.erase span { margin-left: 7px; }
.t-sep3 { margin-left: 19px; height: 20px; }
.t-print { margin-left: 16px; }
.t-save { margin-left: 25px; }
.t-saveas { margin-left: 24px; }
.t-sep4 { margin-left: 17px; height: 20px; background: #484848; }
.pin { margin-left: 2px; width: 42px; height: 33px; background: #49484c; display: flex; align-items: center; justify-content: center; }
.pdf-body { flex: 1; min-height: 0; display: flex; justify-content: flex-start; padding-left: 295px; overflow: hidden; }
.page { width: 1003px; height: 100%; background: #fefdff; color: #111; font-family: "Liberation Sans", Arial, sans-serif; overflow: hidden; flex: none; }
.banner { margin-bottom: 19px; }
.copy { padding-left: 96px; font-size: 33.550px; line-height: 36.200px; white-space: nowrap; }
.copy p { margin: 0; }
.para { position: relative; }
.bullet { position: absolute; left: -37px; top: 12px; width: 16px; height: 15px; background: #2c1a80; }
.blue { color: #3a3ae0; }
.gap { margin-top: 8px !important; }
.l-set { padding-left: 17px; }
.l-x { padding-left: 101px; }
.l-eq { padding-left: 130px; }
sub { font-size: 62%; line-height: 0; }
.matrix-row { display: flex; align-items: center; margin: 20px 0 0 139px; font-family: "Liberation Serif", serif; color: #333; font-size: 30px; line-height: 30.500px; }
.mat-label { width: 76px; font-size: 32px; word-spacing: 6px; }
.mat-label sub { font-size: 60%; }
.matrix { width: 227px; display: grid; grid-template-columns: repeat(5, 43.500px); justify-content: center; justify-items: center; border-left: 3px solid #444; border-right: 3px solid #444; position: relative; }
.matrix::before, .matrix::after { content: ""; position: absolute; top: 0; width: 14px; height: 3px; background: #444; }
.matrix::before { left: 0; }
.matrix::after { right: 0; }
.pill { position: absolute; left: 740px; top: 358px; width: 132px; height: 44px; border-radius: 22px; background: #87888b; display: flex; align-items: center; justify-content: space-between; padding: 0 11px; box-shadow: 0 1px 3px rgba(0,0,0,.2); }
.scroll { width: 18px; flex: none; background: #f0f0f0; position: relative; }
.sc-up { position: absolute; left: 5px; top: 8px; width: 0; height: 0; border-left: 4px solid transparent; border-right: 4px solid transparent; border-bottom: 5px solid #444; }
.sc-thumb { position: absolute; left: 3px; top: 519px; width: 12px; height: 14px; background: #c0c0c0; }

/* bottom */
.bottom { height: 88px; flex: none; background: #fff; display: flex; align-items: center; font-family: Roboto, sans-serif; color: #3c4043; }
.meeting { width: 860px; padding: 0 0 2px 24px; display: flex; align-items: center; gap: 14px; font-size: 18.400px; font-weight: 400; }
.calls { display: flex; gap: 16px; }
.round { width: 56px; height: 56px; border-radius: 50%; border: 1px solid #dadce0; background: #fff; display: flex; align-items: center; justify-content: center; padding: 0; }
.round.red { background: #e2000f; border: 0; }
.actions { display: flex; align-items: center; margin-left: auto; padding-right: 27px; }
.act { display: flex; flex-direction: column; align-items: center; font-size: 13.700px; line-height: 18.500px; white-space: nowrap; width: 160px; }
.caps svg { margin-bottom: 7px; }
.pres svg { margin-bottom: 8px; }
.pres { width: 150px; margin-left: 3px; padding-top: 1px; }
.kebab { margin-left: 27px; }
```
